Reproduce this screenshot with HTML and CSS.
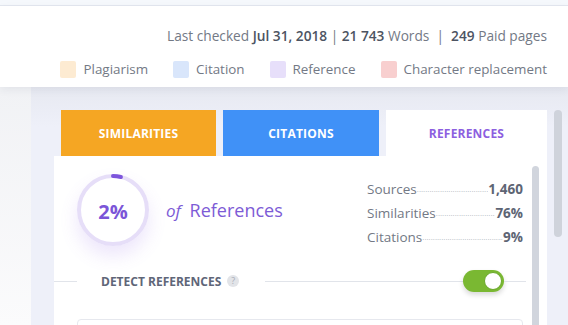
FILE: index.html
```html
<!DOCTYPE html>
<html lang="en">
<head>
  <meta charset="UTF-8" />
  <meta name="viewport" content="width=device-width, initial-scale=1.0"/>
  <title>Report - References</title>
  <link rel="stylesheet" href="styles.css">
</head>
<body>

  <div class="topbar"></div>

  <header class="meta">
    <div class="checked">
      Last checked <b>Jul 31, 2018</b> | <b>21 743</b> Words &nbsp;|&nbsp; <b>249</b> Paid pages
    </div>
    <ul class="legend">
      <li><span class="swatch plag"></span>Plagiarism</li>
      <li><span class="swatch cite"></span>Citation</li>
      <li><span class="swatch ref"></span>Reference</li>
      <li><span class="swatch char"></span>Character replacement</li>
    </ul>
  </header>

  <div class="workspace">
    <aside class="sidebar"></aside>

    <section class="panel">
      <div class="pane">
        <nav class="tabs">
          <div class="tab sim">Similarities</div>
          <div class="tab cit">Citations</div>
          <div class="tab refs active">References</div>
        </nav>

        <div class="card">
          <div class="card-body">
            <div class="summary">
              <div class="ring">
                <svg width="72" height="72" viewBox="0 0 72 72">
                  <circle cx="36" cy="36" r="34" fill="#fff" stroke="#e6def8" stroke-width="4"/>
                  <circle cx="36" cy="36" r="34" fill="none" stroke="#7d55dc" stroke-width="4" stroke-linecap="round" stroke-dasharray="8 220" transform="rotate(-90 36 36)"/>
                </svg>
                <span class="pct">2%</span>
              </div>
              <div class="of"><i>of</i> References</div>
              <ul class="stats">
                <li><span>Sources</span><span class="leader"></span><b>1,460</b></li>
                <li><span>Similarities</span><span class="leader"></span><b>76%</b></li>
                <li><span>Citations</span><span class="leader"></span><b>9%</b></li>
              </ul>
            </div>

            <div class="detect">
              <span class="rule short"></span>
              <span class="detect-label">Detect references</span>
              <span class="help">?</span>
              <span class="rule grow"></span>
              <span class="toggle"><span class="knob"></span></span>
              <span class="rule tail"></span>
            </div>

            <div class="box"></div>
          </div>
          <div class="card-rail"></div>
        </div>
      </div>
      <div class="panel-rail"></div>
    </section>
  </div>

</body>
</html>
```

FILE: styles.css
```css
body {
  margin: 0;
  font-family: 'Open Sans', 'Liberation Sans', sans-serif;
  color: #737985;
  background-color: #fff;
  height: 325px;
  overflow: hidden;
}

.topbar {
  height: 5px;
  background-color: #f5f8fc;
  border-bottom: 1px solid #e3e7ef;
}

/* en-tete avec la date et la legende */
.meta {
  position: relative;
  z-index: 1;
  height: 81px;
  background-color: #fff;
  padding-right: 21px;
  box-shadow: 0 3px 8px rgba(40, 50, 90, 0.07);
}

.checked {
  padding-top: 20px;
  text-align: right;
  font-size: 13.7px;
  line-height: 20px;
}

.checked b {
  font-weight: 600;
  color: #4d5462;
}

.legend {
  list-style: none;
  margin: 13px 0 0;
  padding: 0;
  display: flex;
  justify-content: flex-end;
  gap: 25px;
  font-size: 13.4px;
  line-height: 20px;
}

.legend li {
  display: flex;
  align-items: center;
  gap: 7px;
}

.swatch {
  width: 16px;
  height: 17px;
  border-radius: 2px;
}

.plag { background-color: #fdebd2; }
.cite { background-color: #d9e6fb; }
.ref  { background-color: #e7dffa; }
.char { background-color: #f8cfcf; }

.workspace {
  display: flex;
  height: 238px;
}

.sidebar {
  width: 31px;
  background: linear-gradient(#f1f2f5, #fbfbfc);
}

.panel {
  flex: 1;
  display: flex;
  gap: 7px;
  padding: 23px 0 0 23px;
  background: linear-gradient(#e7e9f1, #eef0f9 40px);
}

.pane {
  width: 493px;
  display: flex;
  flex-direction: column;
}

.tabs {
  display: flex;
  gap: 7px;
  padding-left: 7px;
}

.tab {
  height: 46px;
  display: flex;
  align-items: center;
  justify-content: center;
  font-size: 12px;
  font-weight: 700;
  text-transform: uppercase;
  color: #fff;
  letter-spacing: 0.2px;
}

.sim { width: 155px; background-color: #f5a623; }
.cit { width: 156px; background-color: #4091f7; }

.refs.active {
  width: 161px;
  height: 47px;
  background-color: #fff;
  color: #8d5fe0;
}

.card {
  flex: 1;
  display: flex;
  background-color: #fff;
  margin-top: -1px;
}

.card-body {
  flex: 1;
  padding: 18px 9px 0 23px;
}

.card-rail {
  width: 7px;
  margin: 10px 8px 0 0;
  border-radius: 4px 4px 0 0;
  background-color: #d1d5dd;
}

.panel-rail {
  width: 8px;
  height: 127px;
  border-radius: 4px;
  background-color: #cfd3db;
}

.summary {
  display: flex;
  align-items: flex-start;
}

.ring {
  position: relative;
  width: 72px;
  height: 72px;
  border-radius: 50%;
  box-shadow: 0 10px 18px rgba(140, 100, 230, 0.16);
}

.ring svg {
  display: block;
}

.pct {
  position: absolute;
  inset: 0;
  display: flex;
  align-items: center;
  justify-content: center;
  padding-top: 3px;
  font-size: 20px;
  font-weight: 700;
  color: #7b55d8;
}

.of {
  margin: 24px 0 0 17px;
  font-size: 18px;
  line-height: 24px;
  color: #7d5bd6;
}

.of i {
  margin-right: 4px;
  font-size: 17px;
}

.stats {
  list-style: none;
  margin: 3px 0 0 auto;
  padding: 0;
  width: 156px;
  font-size: 13.5px;
  line-height: 24px;
}

.stats li {
  display: flex;
  white-space: nowrap;
}

.stats b {
  color: #5e6574;
  font-weight: 700;
}

.leader {
  flex: 1;
  overflow: hidden;
  color: #b5bac3;
  font-size: 8px;
}

.leader::after {
  content: "................................................................";
}

.detect {
  display: flex;
  align-items: center;
  height: 24px;
  margin: 20px -3px 0 -23px;
}

.rule {
  height: 1px;
  background-color: #e1e4ea;
}

.short { width: 23px; margin-right: 24px; }
.grow { flex: 1; margin-left: 26px; }
.tail { width: 22px; }

.detect-label {
  font-size: 12px;
  font-weight: 700;
  text-transform: uppercase;
  color: #5f6678;
}

.help {
  width: 12px;
  height: 12px;
  margin-left: 6px;
  border-radius: 50%;
  background-color: #e2e4e8;
  color: #a9aeb8;
  font-size: 9px;
  line-height: 12px;
  text-align: center;
}

.toggle {
  width: 41px;
  height: 22px;
  border-radius: 11px;
  background-color: #7ab832;
  display: flex;
  justify-content: flex-end;
  align-items: center;
  padding-right: 2px;
  box-sizing: border-box;
  box-shadow: 0 3px 5px rgba(0, 0, 0, 0.15);
}

.knob {
  width: 16px;
  height: 16px;
  border-radius: 50%;
  background-color: #fff;
  border: 1px solid #6aa82a;
}

.box {
  height: 40px;
  margin: 26px 0 0;
  border: 1px solid #e6e8ee;
  border-radius: 4px;
}
```
